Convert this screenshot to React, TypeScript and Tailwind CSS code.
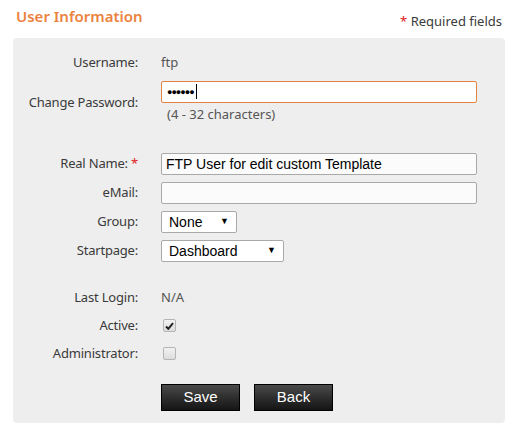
import React from 'react';

const labelFont = { fontFamily: '"Noto Sans", "Open Sans", sans-serif' };
const fieldFont = { fontFamily: '"Liberation Sans", Arial, sans-serif' };

const Row: React.FC<{ label: React.ReactNode; className?: string; children?: React.ReactNode }> = ({ label, className = '', children }) => (
    <div className={`flex items-center ${className}`}>
        <div className="w-[125px] shrink-0 text-right text-[13px] tracking-[-0.2px] text-[#3a3a3a]">{label}</div>
        <div className="ml-[23px] flex flex-1 items-center">{children}</div>
    </div>
);

const Select: React.FC<{ value: string; width: string }> = ({ value, width }) => (
    <div
        className={`flex h-[22px] ${width} items-center justify-between rounded-[2px] border border-[#a9a9a9] bg-white pl-[7px] pr-[7px] text-[14px] text-black`}
        style={fieldFont}
    >
        <span>{value}</span>
        <span className="text-[9px]">▼</span>
    </div>
);

const Check: React.FC<{ checked?: boolean }> = ({ checked }) => (
    <div className="ml-[2px] flex h-[13px] w-[13px] items-center justify-center rounded-[2px] border border-[#b5b5b5] bg-gradient-to-b from-[#f2f2f2] to-[#dcdcdc]">
        {checked && (
            <svg width="9" height="8" viewBox="0 0 9 8">
                <path d="M1 4.5 L3.3 6.8 L8 1.2" stroke="#222" strokeWidth="2" fill="none" />
            </svg>
        )}
    </div>
);

const Button: React.FC<{ children: React.ReactNode }> = ({ children }) => (
    <button
        className="h-[27px] w-[79px] border border-black bg-gradient-to-b from-[#4a4a4a] to-[#151515] text-[15px] text-white"
        style={fieldFont}
    >
        {children}
    </button>
);

const App: React.FC = () => {
    return (
        <div className="h-[435px] w-[518px] bg-white" style={labelFont}>
            <div className="flex items-end justify-between pl-[16px] pr-[16px] pt-[5px]">
                <h2 className="text-[15px] font-semibold text-[#ec8340]">User Information</h2>
                <div className="mb-[-4px] text-[13px] text-[#3a3a3a]">
                    <span className="text-[#e0201a]">*</span> Required fields
                </div>
            </div>

            <div className="mx-[13px] mt-[10px] h-[385px] rounded-[4px] bg-[#eeeeee] pt-[12px]">
                <Row label="Username:" className="h-[26px]">
                    <span className="text-[13px] text-[#555]">ftp</span>
                </Row>

                <Row label="Change Password:" className="mt-[3px]">
                    <div className="flex flex-1 flex-col pr-[28px] pt-[2px]">
                        <div className="flex h-[22px] items-center rounded-[2px] border border-[#e08545] bg-white pl-[5px]">
                            <span className="text-[9px] leading-none tracking-[-1px] text-black">●●●●●●</span>
                            <span className="ml-[2px] h-[15px] w-[1px] bg-black" />
                        </div>
                        <div className="flex h-[24px] items-center pl-[6px] text-[13px] text-[#555]">(4 - 32 characters)</div>
                    </div>
                </Row>

                <div className="mt-[23px]">
                    <Row
                        label={
                            <span>
                                Real Name: <span className="text-[#e0201a]">*</span>
                            </span>
                        }
                        className="h-[29px]"
                    >
                        <input
                            readOnly
                            value="FTP User for edit custom Template"
                            className="h-[22px] w-[316px] rounded-[2px] border border-[#a9a9a9] bg-[#fbfbfb] px-[4px] text-[14px] text-black outline-none"
                            style={fieldFont}
                        />
                    </Row>
                    <Row label="eMail:" className="h-[29px]">
                        <input
                            readOnly
                            value=""
                            className="h-[22px] w-[316px] rounded-[2px] border border-[#a9a9a9] bg-[#fbfbfb] px-[4px] text-[14px] outline-none"
                            style={fieldFont}
                        />
                    </Row>
                    <Row label="Group:" className="h-[29px]">
                        <Select value="None" width="w-[76px]" />
                    </Row>
                    <Row label="Startpage:" className="h-[29px]">
                        <Select value="Dashboard" width="w-[123px]" />
                    </Row>
                </div>

                <div className="mt-[18px]">
                    <Row label="Last Login:" className="h-[28px]">
                        <span className="text-[13px] text-[#555]">N/A</span>
                    </Row>
                    <Row label="Active:" className="h-[28px]">
                        <Check checked />
                    </Row>
                    <Row label="Administrator:" className="h-[28px]">
                        <Check />
                    </Row>
                </div>

                <Row label="" className="mt-[16px]">
                    <div className="flex gap-[14px]">
                        <Button>Save</Button>
                        <Button>Back</Button>
                    </div>
                </Row>
            </div>
        </div>
    );
};

export default App;
